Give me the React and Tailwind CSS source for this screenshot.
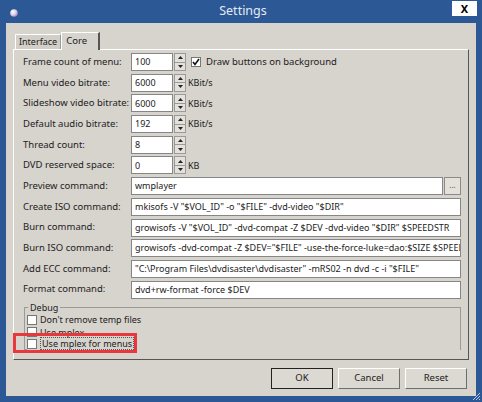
import React from 'react';

const font = { fontFamily: '"Noto Sans", "Open Sans", sans-serif' };

function Spin() {
  return (
    <div className="flex flex-col w-[12px] h-[18px] ml-[1px] border border-[#9a9a9a] bg-[#e4e0da]">
      <div className="flex-1 flex items-center justify-center border-b border-[#9a9a9a]">
        <svg width="5" height="3" viewBox="0 0 5 3"><path d="M0 3 L2.5 0 L5 3 Z" fill="#222" /></svg>
      </div>
      <div className="flex-1 flex items-center justify-center">
        <svg width="5" height="3" viewBox="0 0 5 3"><path d="M0 0 L2.5 3 L5 0 Z" fill="#222" /></svg>
      </div>
    </div>
  );
}

function Field({ value, w = 'w-[42px]' }) {
  return (
    <div className={`${w} h-[18px] bg-white border border-[#868686] flex items-center pl-[3px] overflow-hidden whitespace-nowrap text-[9px] text-[#222]`}>
      {value}
    </div>
  );
}

function SpinRow({ label, value, unit, extra }) {
  return (
    <div className="flex items-center h-[18px]">
      <div className="w-[108px] shrink-0 whitespace-nowrap">{label}</div>
      <Field value={value} />
      <Spin />
      {unit && <span className="ml-[2px] text-[9px]">{unit}</span>}
      {extra}
    </div>
  );
}

function TextRow({ label, value, button }) {
  return (
    <div className="flex items-center h-[18px]">
      <div className="w-[108px] shrink-0 whitespace-nowrap">{label}</div>
      <Field value={value} w="flex-1 min-w-0" />
      {button && (
        <div className="w-[17px] h-[18px] ml-[1px] border border-[#8a8a8a] bg-[#e4e0da] flex items-center justify-center text-[8px] leading-none pb-[2px] text-[#555]">
          ...
        </div>
      )}
    </div>
  );
}

function Check({ checked }) {
  return (
    <div className="w-[10px] h-[10px] bg-white border border-[#777] flex items-center justify-center shrink-0">
      {checked && (
        <svg width="8" height="8" viewBox="0 0 8 8">
          <path d="M1 4 L3 6.5 L7 1" stroke="#111" strokeWidth="1.6" fill="none" />
        </svg>
      )}
    </div>
  );
}

function Btn({ children, primary }) {
  return (
    <div
      className={`w-[62px] h-[21px] flex items-center justify-center bg-[#dcd8d2] text-[#222] ${
        primary ? 'border border-[#222]' : 'border border-t-white border-l-white border-b-[#6e6e6e] border-r-[#6e6e6e]'
      }`}
    >
      {children}
    </div>
  );
}

export default function App() {
  return (
    <div style={font} className="w-[482px] h-[402px] bg-[#2c5896] flex flex-col text-[9.5px] text-[#222] relative overflow-hidden">
      {/* title bar */}
      <div className="h-[23px] shrink-0 grid grid-cols-[1fr_auto_1fr] items-center">
        <div className="pl-[10px] flex items-center pt-[2px]">
          <svg width="8" height="8" viewBox="0 0 8 8">
            <defs>
              <radialGradient id="d" cx="0.35" cy="0.35" r="0.7">
                <stop offset="0" stopColor="#ffffff" />
                <stop offset="0.6" stopColor="#d9cde6" />
                <stop offset="1" stopColor="#9a86b8" />
              </radialGradient>
            </defs>
            <circle cx="4" cy="4" r="3.8" fill="url(#d)" />
          </svg>
        </div>
        <div className="text-[12.5px] text-[#e4ebf4] pl-[4px]">Settings</div>
        <div className="flex justify-end self-start pt-[1px] pr-[5px]">
          <div className="w-[25px] h-[15px] bg-white flex items-center justify-center text-[11px] font-bold text-black leading-none">X</div>
        </div>
      </div>

      {/* client area */}
      <div className="flex-1 mx-[6px] mb-[6px] bg-[#d7d3cd] flex flex-col px-[7px] pt-[8px]">
        {/* tabs */}
        <div className="flex items-end h-[18px] pl-[2px]">
          <div className="h-[15px] px-[3px] flex items-center border border-b-0 border-t-white border-l-white border-r-[#9a9a9a] bg-[#d2cec8] whitespace-nowrap text-[9px]">Interface</div>
          <div className="h-[18px] w-[39px] pl-[4px] flex items-center border-t border-l border-t-white border-l-white border-r-2 border-r-[#555] bg-[#d7d3cd] relative top-[1px] z-10">Core</div>
        </div>

        {/* panel */}
        <div className="h-[311px] border border-t-white border-l-white border-b-[#555] border-r-[#555] flex flex-col pl-[9px] pr-[7px] pt-[3px]">
          <div className="flex flex-col gap-[2.7px]">
            <SpinRow
              label="Frame count of menu:"
              value="100"
              extra={
                <div className="flex items-center ml-[5px]">
                  <Check checked />
                  <span className="ml-[5px]">Draw buttons on background</span>
                </div>
              }
            />
            <SpinRow label="Menu video bitrate:" value="6000" unit="KBit/s" />
            <SpinRow label="Slideshow video bitrate:" value="6000" unit="KBit/s" />
            <SpinRow label="Default audio bitrate:" value="192" unit="KBit/s" />
            <SpinRow label="Thread count:" value="8" />
            <SpinRow label="DVD reserved space:" value="0" unit="KB" />
            <TextRow label="Preview command:" value="wmplayer" button />
            <TextRow label="Create ISO command:" value={'mkisofs -V "$VOL_ID" -o "$FILE" -dvd-video "$DIR"'} />
            <TextRow label="Burn command:" value={'growisofs -V "$VOL_ID" -dvd-compat -Z $DEV -dvd-video "$DIR" $SPEEDSTR'} />
            <TextRow label="Burn ISO command:" value={'growisofs -dvd-compat -Z $DEV="$FILE" -use-the-force-luke=dao:$SIZE $SPEEDSTR'} />
            <TextRow label="Add ECC command:" value={'"C:\\Program Files\\dvdisaster\\dvdisaster" -mRS02 -n dvd -c -i "$FILE"'} />
            <TextRow label="Format command:" value="dvd+rw-format -force $DEV" />
          </div>

          {/* debug group */}
          <fieldset className="mt-[3px] ml-[1px] h-[48px] border border-[#9a9a9a] pl-[2px] pr-0 relative text-[9px]">
            <legend className="px-[2px] ml-[1px] leading-[11px]">Debug</legend>
            <div className="flex flex-col pt-[1px]">
              <div className="flex items-center h-[12px] gap-[3px]"><Check /><span>Don't remove temp files</span></div>
              <div className="flex items-center h-[12px] gap-[3px] overflow-hidden"><Check /><span className="relative top-[1px]">Use mplex</span></div>
              <div className="flex items-center h-[12px] gap-[3px] bg-[#d7d3cd]">
                <Check />
                <span className="border border-dotted border-[#555] px-[1px] leading-[11px] whitespace-nowrap">Use mplex for menus</span>
              </div>
            </div>
          </fieldset>
        </div>

        {/* buttons */}
        <div className="flex justify-end gap-[5px] mt-[8px] pr-[2px]">
          <Btn primary>OK</Btn>
          <Btn>Cancel</Btn>
          <Btn>Reset</Btn>
        </div>
      </div>

      {/* annotation */}
      <div className="absolute left-[13px] top-[333px] w-[124px] h-[20px] border-[3px] border-[#e8383d]" />

      {/* resize grip */}
      <svg className="absolute right-[1px] bottom-[1px]" width="10" height="10" viewBox="0 0 10 10">
        <path d="M9 2 L2 9 M9 5 L5 9 M9 8 L8 9" stroke="#b8c6dc" strokeWidth="1" />
      </svg>
    </div>
  );
}
